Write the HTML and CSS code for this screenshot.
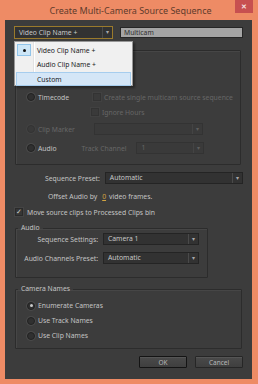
FILE: index.html
```html
<!DOCTYPE html>
<html lang="en">
<head>
    <meta charset="UTF-8">
    <title>Create Multi-Camera Source Sequence</title>
    <link rel="stylesheet" href="styles.css">
</head>
<body>
    <div class="window">
        <div class="titlebar">
            <span class="title">Create Multi-Camera Source Sequence</span>
            <span class="close">&#x2715;</span>
        </div>
        <div class="panel">
            <div class="top-row">
                <div class="select select-name focused">
                    <span class="select-text">Video Clip Name +</span>
                    <span class="select-arrow">&#9662;</span>
                </div>
                <div class="textfield">Multicam</div>
            </div>

            <!-- name popup menu (open) -->
            <div class="menu">
                <div class="menu-item checked"><span class="menu-check"><span class="dot"></span></span>Video Clip Name +</div>
                <div class="menu-item"><span class="menu-check"></span>Audio Clip Name +</div>
                <div class="menu-item hover"><span class="menu-check"></span>Custom</div>
            </div>

            <fieldset class="group group-sync">
                <div class="spacer"></div>
                <div class="row row-timecode">
                    <span class="radio"></span>
                    <span class="lbl lbl-radio">Timecode</span>
                    <span class="check disabled"></span>
                    <span class="lbl disabled">Create single multicam source sequence</span>
                </div>
                <div class="row row-ignore">
                    <span class="check disabled"></span>
                    <span class="lbl disabled">Ignore Hours</span>
                </div>
                <div class="row row-marker">
                    <span class="radio disabled"></span>
                    <span class="lbl lbl-radio disabled">Clip Marker</span>
                    <div class="select select-marker disabled">
                        <span class="select-text"></span>
                        <span class="select-arrow">&#9662;</span>
                    </div>
                </div>
                <div class="row row-audio">
                    <span class="radio"></span>
                    <span class="lbl lbl-radio">Audio</span>
                    <span class="lbl disabled lbl-track">Track Channel</span>
                    <div class="select select-track disabled">
                        <span class="select-text">1</span>
                        <span class="select-arrow">&#9662;</span>
                    </div>
                </div>
            </fieldset>

            <div class="form-row row-preset">
                <span class="form-label">Sequence Preset:</span>
                <div class="select select-preset">
                    <span class="select-text">Automatic</span>
                    <span class="select-arrow">&#9662;</span>
                </div>
            </div>

            <div class="row row-offset">
                <span class="lbl">Offset Audio by</span>
                <span class="num">0</span>
                <span class="lbl">video frames.</span>
            </div>

            <div class="row row-move">
                <span class="check checked">&#10003;</span>
                <span class="lbl">Move source clips to Processed Clips bin</span>
            </div>

            <fieldset class="group group-audio">
                <legend>Audio</legend>
                <div class="form-row row-seqset">
                    <span class="form-label">Sequence Settings:</span>
                    <div class="select select-small">
                        <span class="select-text">Camera 1</span>
                        <span class="select-arrow">&#9662;</span>
                    </div>
                </div>
                <div class="form-row row-channels">
                    <span class="form-label">Audio Channels Preset:</span>
                    <div class="select select-small">
                        <span class="select-text">Automatic</span>
                        <span class="select-arrow">&#9662;</span>
                    </div>
                </div>
            </fieldset>

            <fieldset class="group group-names">
                <legend>Camera Names</legend>
                <div class="row row-name">
                    <span class="radio selected"></span>
                    <span class="lbl lbl-radio">Enumerate Cameras</span>
                </div>
                <div class="row row-name">
                    <span class="radio"></span>
                    <span class="lbl lbl-radio">Use Track Names</span>
                </div>
                <div class="row row-name">
                    <span class="radio"></span>
                    <span class="lbl lbl-radio">Use Clip Names</span>
                </div>
            </fieldset>

            <div class="buttons">
                <button class="btn btn-default">OK</button>
                <button class="btn">Cancel</button>
            </div>
        </div>
    </div>
</body>
</html>
```
FILE: styles.css
```css
body {
    margin: 0;
    padding: 0;
    background-color: #ee8b65;
    font-family: "Noto Sans", "Open Sans", sans-serif;
    font-size: 6.8px;
    color: #c4c4c4;
}

.window {
    width: 258px;
    height: 384px;
    box-sizing: border-box;
    padding: 0 6px 5px 5px;
}

.titlebar {
    height: 20px;
    display: flex;
    align-items: center;
    justify-content: center;
    position: relative;
}

.title {
    font-size: 9px;
    color: #5e3b2c;
    margin-left: 4px;
}

.close {
    position: absolute;
    top: 0;
    right: -1px;
    width: 18px;
    height: 13px;
    background-color: #c75050;
    color: #f3dcdc;
    font-size: 7px;
    font-weight: bold;
    display: flex;
    align-items: center;
    justify-content: center;
}

.panel {
    position: relative;
    height: 359px;
    background-color: #3c3c3c;
    box-sizing: border-box;
    padding: 6px 9px 0 9px;
    display: flex;
    flex-direction: column;
}

/* top row */
.top-row {
    display: flex;
    align-items: center;
    height: 13px;
}

.select {
    display: flex;
    align-items: stretch;
    box-sizing: border-box;
    height: 12px;
    background-color: #323232;
    border: 1px solid #242424;
    color: #c8c8c8;
}

.select-text {
    flex: 1;
    padding-left: 4px;
    line-height: 10px;
    white-space: nowrap;
    overflow: hidden;
}

.select-arrow {
    width: 9px;
    border-left: 1px solid #4a4a4a;
    font-size: 6px;
    line-height: 10px;
    text-align: center;
    color: #a8a8a8;
}

.select-name {
    width: 99px;
    height: 13px;
}

.select-name .select-text,
.select-name .select-arrow {
    line-height: 11px;
}

.focused {
    border-color: #9a7a2c;
}

.textfield {
    margin-left: 7px;
    width: 123px;
    height: 11px;
    box-sizing: border-box;
    background-color: #a5a5a5;
    border: 1px solid #262626;
    color: #2e2e2e;
    padding-left: 3px;
    line-height: 9px;
}

/* popup menu */
.menu {
    position: absolute;
    left: 9px;
    top: 21px;
    width: 119px;
    height: 45px;
    box-sizing: border-box;
    background-color: #f0f0f0;
    border: 1px solid #979797;
    box-shadow: 2px 2px 2px rgba(0, 0, 0, 0.35);
    padding: 1px;
    color: #1a1a1a;
    z-index: 5;
    background-image: linear-gradient(to right, transparent 18px, #e2e2e2 18px, #e2e2e2 19px, #ffffff 19px, #ffffff 20px, transparent 20px);
}

.menu-item {
    display: flex;
    align-items: center;
    height: 14px;
    box-sizing: border-box;
    border: 1px solid transparent;
}

.menu-check {
    width: 14px;
    height: 12px;
    margin-right: 6px;
    display: flex;
    align-items: center;
    justify-content: center;
    box-sizing: border-box;
}

.checked .menu-check {
    background-color: #cde6f7;
    border: 1px solid #90c4ea;
}

.dot {
    width: 3px;
    height: 3px;
    border-radius: 50%;
    background-color: #111;
}

.menu-item.hover {
    background-color: #d4e6f7;
    border-color: #a6cdee;
    margin-top: 1px;
}

/* groups */
.group {
    margin: 0;
    padding: 0;
    border: 1px solid #2c2c2c;
    box-shadow: inset 1px 1px 0 #464646;
    border-radius: 1px;
    min-width: 0;
}

.group legend {
    padding: 0 3px;
    margin-left: 2px;
    color: #c4c4c4;
    line-height: 8px;
}

.group-sync {
    margin-top: 11px;
    margin-left: 1px;
    width: 226px;
    height: 115px;
    box-sizing: border-box;
}

.spacer {
    height: 39px;
}

.row {
    display: flex;
    align-items: center;
    height: 14px;
    white-space: nowrap;
}

.radio {
    width: 6px;
    height: 6px;
    border-radius: 50%;
    border: 1px solid #222;
    background-color: #303030;
    box-shadow: 0 0 0 1px #4a4a4a;
    margin-left: 11px;
    display: flex;
    align-items: center;
    justify-content: center;
}

.radio.selected::after {
    content: "";
    width: 3px;
    height: 3px;
    border-radius: 50%;
    background-color: #c8c8c8;
}

.radio.disabled {
    border-color: #333;
    box-shadow: 0 0 0 1px #424242;
    background-color: #393939;
}

.lbl-radio {
    margin-left: 3px;
}

.check {
    width: 6px;
    height: 6px;
    border: 1px solid #2a2a2a;
    background-color: #363636;
    box-shadow: 0 0 0 1px #444;
    font-size: 7px;
    line-height: 6px;
    color: #d0d0d0;
    text-align: center;
}

.disabled {
    color: #676767;
}

.check.disabled {
    border-color: #333;
    background-color: #3a3a3a;
    box-shadow: 0 0 0 1px #414141;
}

.row-timecode .check {
    margin-left: 24px;
    margin-right: 3px;
}

.row-ignore {
    margin-top: 1px;
}

.row-ignore .check {
    margin-left: 75px;
    margin-right: 3px;
}

.row-marker {
    margin-top: 3px;
}

.select-marker {
    margin-left: 19px;
    width: 109px;
    background-color: #3a3a3a;
    border-color: #333;
}

.row-audio {
    margin-top: 5px;
}

.lbl-track {
    margin-left: 25px;
}

.select-track {
    margin-left: 10px;
    width: 68px;
    background-color: #3a3a3a;
    border-color: #333;
    color: #676767;
}

.select.disabled .select-arrow {
    border-left-color: #444;
    color: #5e5e5e;
}

/* label + control rows */
.form-row {
    display: flex;
    align-items: center;
    height: 12px;
    white-space: nowrap;
}

.form-label {
    width: 87px;
    text-align: right;
    margin-right: 5px;
}

.row-preset {
    margin-top: 7px;
}

.select-preset {
    width: 140px;
}

.row-offset {
    margin-top: 6px;
    height: 12px;
    padding-left: 34px;
}

.num {
    color: #d2a442;
    text-decoration: underline;
    margin: 0 3px 0 5px;
}

.row-move {
    margin-top: 4px;
    height: 12px;
}

.row-move .check {
    margin-left: 1px;
    margin-right: 4px;
}

.group-audio {
    margin-top: 6px;
    margin-left: 1px;
    width: 193px;
    height: 54px;
    box-sizing: border-box;
}

.group-audio .form-label {
    width: 82px;
}

.row-seqset {
    margin-top: 1px;
}

.row-channels {
    margin-top: 7px;
}

.select-small {
    width: 96px;
}

.group-names {
    margin-top: 7px;
    margin-left: 1px;
    width: 227px;
    height: 64px;
    box-sizing: border-box;
}

.row-name {
    height: 15px;
}

.row-name:first-of-type {
    margin-top: 5px;
}

/* buttons */
.buttons {
    display: flex;
    justify-content: flex-end;
    gap: 8px;
    margin-top: 7px;
}

.btn {
    width: 48px;
    height: 12px;
    padding: 0;
    font-family: "Noto Sans", "Open Sans", sans-serif;
    font-size: 6.5px;
    color: #b8b8b8;
    background: linear-gradient(#4a4a4a, #3f3f3f);
    border: 1px solid #262626;
    border-radius: 1px;
    box-shadow: inset 0 1px 0 #555;
}

.btn-default {
    border-color: #141414;
}
```
